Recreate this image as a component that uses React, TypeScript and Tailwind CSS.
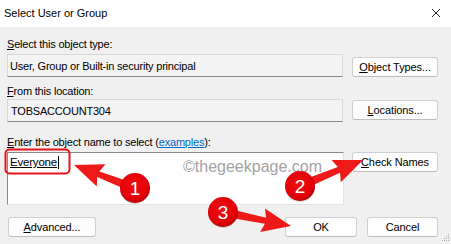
import React from "react";

function arrowPoints(tx: number, ty: number, hx: number, hy: number) {
  const headL = 26, headW = 12, sH = 3, sT = 4.5;
  const dx = hx - tx, dy = hy - ty;
  const len = Math.hypot(dx, dy);
  const ux = dx / len, uy = dy / len;
  const nx = -uy, ny = ux;
  const bx = hx - ux * headL, by = hy - uy * headL;
  const pts = [
    [tx + nx * sT, ty + ny * sT],
    [bx + nx * sH, by + ny * sH],
    [bx + nx * headW - ux * 3, by + ny * headW - uy * 3],
    [hx, hy],
    [bx - nx * headW - ux * 3, by - ny * headW - uy * 3],
    [bx - nx * sH, by - ny * sH],
    [tx - nx * sT, ty - ny * sT],
  ];
  return pts.map((p) => p[0].toFixed(1) + "," + p[1].toFixed(1)).join(" ");
}

function Badge({ cx, cy, n }: { cx: number; cy: number; n: string }) {
  return (
    <g>
      <circle cx={cx} cy={cy + 1} r={15} fill="rgba(0,0,0,0.18)" />
      <circle cx={cx} cy={cy} r={15} fill="url(#rg)" />
      <text
        x={cx}
        y={cy + 6.5}
        textAnchor="middle"
        fontFamily="Liberation Sans, Arial, sans-serif"
        fontSize="19"
        fill="#fff"
      >
        {n}
      </text>
    </g>
  );
}

function Btn({ children, className = "" }: { children: React.ReactNode; className?: string }) {
  return (
    <div
      className={
        "h-[20px] flex items-center justify-center rounded-[3px] bg-[#fdfdfd] border border-[#d0d0d0] border-b-[#bdbdbd] text-[11px] tracking-[-0.1px] text-black " +
        className
      }
    >
      {children}
    </div>
  );
}

export default function App() {
  return (
    <div
      className="relative w-[451px] h-[244px] overflow-hidden flex flex-col bg-[#f0f0f0] text-black"
      style={{ fontFamily: '"Liberation Sans", Arial, sans-serif' }}
    >
      <div className="h-[27px] bg-white flex items-center justify-between pl-[4px] pr-[10px] shrink-0">
        <span className="text-[11px] leading-[14px] mt-[-1px]">Select User or Group</span>
        <svg width="10" height="10" viewBox="0 0 10 10" className="mt-[-2px]">
          <path d="M1 1 L9 9 M9 1 L1 9" stroke="#222" strokeWidth="1" />
        </svg>
      </div>

      <div className="flex flex-col px-[7px] text-[11px] leading-[14px] tracking-[-0.2px]">
        <div className="mt-[10px] h-[14px]">
          <span className="underline">S</span>elect this object type:
        </div>
        <div className="mt-[3px] flex gap-[9px]">
          <div className="w-[336px] h-[23px] flex items-center pl-[2px] bg-[#f3f3f3] border border-[#d9d9d9] border-b-[#8a8a8a]">
            User, Group or Built-in security principal
          </div>
          <Btn className="w-[86px] mt-[3px]">
            <span className="underline">O</span>bject Types...
          </Btn>
        </div>

        <div className="mt-[7px] h-[14px]">
          <span className="underline">F</span>rom this location:
        </div>
        <div className="mt-[1px] flex gap-[9px]">
          <div className="w-[336px] h-[23px] flex items-center pl-[3px] bg-[#f3f3f3] border border-[#d9d9d9] border-b-[#8a8a8a]">
            TOBSACCOUNT304
          </div>
          <Btn className="w-[86px] mt-[1px]">
            <span className="underline">L</span>ocations...
          </Btn>
        </div>

        <div className="mt-[13px] h-[14px]">
          <span className="underline">E</span>nter the object name to select (
          <span className="text-[#0066cc] underline">examples</span>):
        </div>
        <div className="mt-[3px] flex gap-[8px]">
          <div className="w-[337px] h-[53px] bg-white border border-[#8a8a8a] border-r-[#e3e3e3] border-b-[#e3e3e3] pl-[2px] pt-[2px]">
            <div className="flex items-center text-[11.5px]">
              <span className="underline">Everyone</span>
              <span className="w-[1px] h-[13px] bg-black ml-[1px]" />
            </div>
          </div>
          <Btn className="w-[86px]">
            <span className="underline">C</span>heck Names
          </Btn>
        </div>

        <div className="mt-[12px] flex">
          <Btn className="w-[88px] ml-[1px]">
            <span className="underline">A</span>dvanced...
          </Btn>
          <div className="flex-1" />
          <Btn className="w-[72px] border-[#0067c0] border-b-[#0067c0]">OK</Btn>
          <Btn className="w-[71px] ml-[10px] mr-[6px]">Cancel</Btn>
        </div>
      </div>

      <div className="absolute left-[183px] top-[157px] text-[16px] leading-[19px] text-[#a3a3a3] pointer-events-none">
        ©thegeekpage.com
      </div>

      <svg className="absolute inset-0 pointer-events-none" width="451" height="244" viewBox="0 0 451 244">
        <defs>
          <radialGradient id="rg" cx="45%" cy="40%" r="60%">
            <stop offset="0%" stopColor="#f01010" />
            <stop offset="80%" stopColor="#e00008" />
            <stop offset="100%" stopColor="#b80000" />
          </radialGradient>
        </defs>
        <rect x="5.5" y="149.5" width="64" height="24" rx="4" fill="none" stroke="#e5141b" strokeWidth="2" />
        <polygon points={arrowPoints(134, 188, 74, 165)} fill="#ee1a1a" />
        <polygon points={arrowPoints(300, 186, 363, 160)} fill="#ee1a1a" />
        <polygon points={arrowPoints(223, 212, 291, 226)} fill="#ee1a1a" />
        <Badge cx={135} cy={188} n="1" />
        <Badge cx={300} cy={186} n="2" />
        <Badge cx={223} cy={212} n="3" />
        <g fill="#b0b0b0">
          <rect x="446" y="236" width="1" height="1" />
          <rect x="448" y="234" width="1" height="1" />
          <rect x="448" y="236" width="1" height="1" />
          <rect x="444" y="238" width="1" height="1" />
          <rect x="446" y="238" width="1" height="1" />
          <rect x="448" y="238" width="1" height="1" />
          <rect x="442" y="240" width="1" height="1" />
          <rect x="444" y="240" width="1" height="1" />
          <rect x="446" y="240" width="1" height="1" />
          <rect x="448" y="240" width="1" height="1" />
        </g>
      </svg>
    </div>
  );
}
